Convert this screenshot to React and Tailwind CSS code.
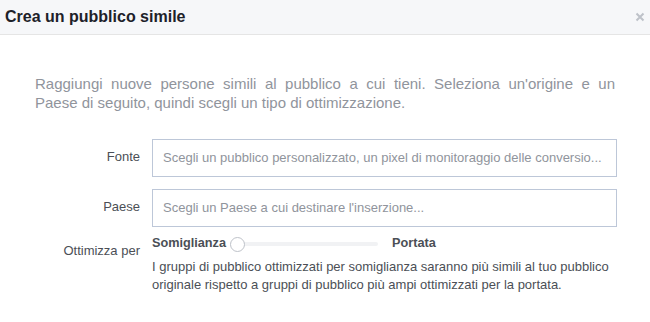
const App = () => {
  return (
    <div className="w-[650px] h-[322px] bg-white overflow-hidden" style={{ fontFamily: '"Liberation Sans", Arial, sans-serif' }}>
      <div className="h-[35px] bg-[#f6f7f9] border-b border-[#e5e5e5] flex items-center justify-between pl-[5px] pr-[5px]">
        <p className="text-[16px] font-bold text-[#1d2129] leading-none">Crea un pubblico simile</p>
        <svg width="10" height="10" viewBox="0 0 10 10" className="text-[#bec2c9]">
          <path d="M1.5 1.5 L8.5 8.5 M8.5 1.5 L1.5 8.5" stroke="currentColor" strokeWidth="2" />
        </svg>
      </div>

      <div className="pt-[39px] pl-[35px] pr-[35px] text-[15px] leading-[19px] text-[#90949c]">
        <p className="text-justify [text-align-last:justify]">
          Raggiungi nuove persone simili al pubblico a cui tieni. Seleziona un'origine e un
        </p>
        <p>Paese di seguito, quindi scegli un tipo di ottimizzazione.</p>
      </div>

      <div className="mt-[27px] flex flex-col gap-[12px]">
        <div className="flex items-start">
          <p className="w-[140px] text-right text-[13px] text-[#4b4f56] pt-[8px]">Fonte</p>
          <div className="ml-[12px] w-[465px] h-[38px] border border-[#bdc7d8] flex items-center px-[10px]">
            <span className="text-[13px] text-[#90949c] truncate">Scegli un pubblico personalizzato, un pixel di monitoraggio delle conversio...</span>
          </div>
        </div>
        <div className="flex items-start">
          <p className="w-[140px] text-right text-[13px] text-[#4b4f56] pt-[8px]">Paese</p>
          <div className="ml-[12px] w-[465px] h-[38px] border border-[#bdc7d8] flex items-center px-[10px]">
            <span className="text-[13px] text-[#90949c] truncate">Scegli un Paese a cui destinare l'inserzione...</span>
          </div>
        </div>
      </div>

      <div className="mt-[8px] flex items-start">
        <p className="w-[140px] text-right text-[13px] text-[#4b4f56] pt-[6px]">Ottimizza per</p>
        <div className="ml-[12px]">
          <div className="flex items-center h-[18px]">
            <span className="text-[12.7px] font-bold text-[#4b4f56]">Somiglianza</span>
            <div className="relative ml-[4px] w-[148px] h-[15px] flex items-center">
              <div className="w-full h-[4px] bg-[#f1f2f4] rounded-full" />
              <div className="absolute left-0 top-0 w-[15px] h-[15px] rounded-full bg-white border border-[#bec2c9]" />
            </div>
            <span className="ml-[14px] text-[12.7px] font-bold text-[#4b4f56]">Portata</span>
          </div>
          <p className="mt-[5px] text-[13px] leading-[18px] text-[#4b4f56] whitespace-nowrap">
            I gruppi di pubblico ottimizzati per somiglianza saranno più simili al tuo pubblico
            <br />
            originale rispetto a gruppi di pubblico più ampi ottimizzati per la portata.
          </p>
        </div>
      </div>
    </div>
  );
};

export default App;
